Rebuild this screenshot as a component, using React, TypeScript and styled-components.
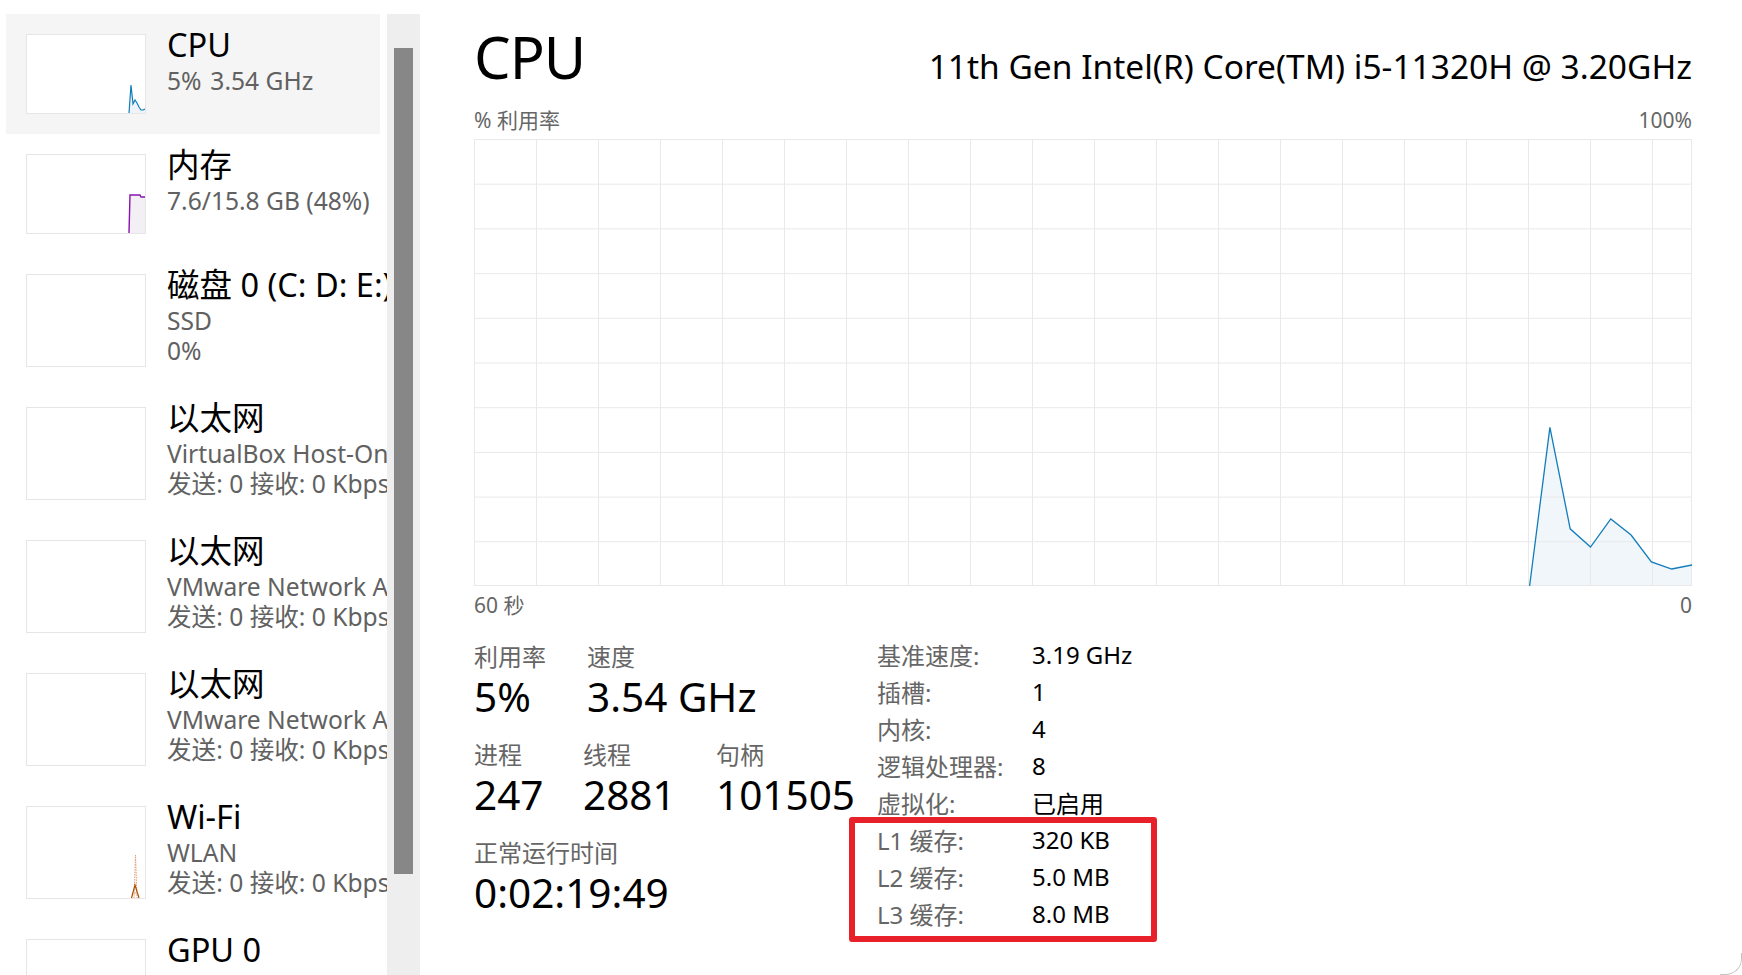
import React from "react";
import styled, { createGlobalStyle } from "styled-components";

const GlobalStyle = createGlobalStyle`
  html, body { margin: 0; padding: 0; background: #fff; }
  body { font-family: "Noto Sans", "Noto Sans CJK SC", sans-serif; color: #000; }
  *, *::before, *::after { box-sizing: border-box; }
`;

const Window = styled.div`
  position: relative;
  display: flex;
  width: 1742px;
  height: 975px;
  overflow: hidden;
  background: #fff;
  border-bottom-right-radius: 16px;
  &::after {
    content: "";
    position: absolute;
    right: 0;
    bottom: 0;
    width: 22px;
    height: 22px;
    border-right: 1.5px solid #c4c4c4;
    border-bottom: 1.5px solid #c4c4c4;
    border-bottom-right-radius: 16px;
    pointer-events: none;
  }
`;

const Sidebar = styled.aside`
  display: flex;
  flex: none;
  width: 420px;
  padding-top: 14px;
`;

const List = styled.div`
  width: 387px;
  padding-left: 6px;
  overflow: hidden;
  display: flex;
  flex-direction: column;
`;

const Item = styled.div<{ $selected?: boolean }>`
  display: flex;
  flex: none;
  gap: 21px;
  width: 374px;
  padding: 10px 0 20px 20px;
  background: ${(p) => (p.$selected ? "#f5f5f5" : "transparent")};
`;

const Thumb = styled.div<{ $h: number }>`
  flex: none;
  width: 120px;
  height: ${(p) => p.$h}px;
  margin-top: 10px;
  border: 1px solid #e6e6e6;
  background: #fff;
  svg { display: block; }
`;

const ItemText = styled.div`
  display: flex;
  flex-direction: column;
  white-space: nowrap;
`;

const ItemTitle = styled.div`
  font-size: 32.5px;
  line-height: 42px;
  color: #000;
`;

const ItemSub = styled.div`
  font-size: 24.6px;
  line-height: 30px;
  color: #616161;
`;

const ScrollTrack = styled.div`
  width: 33px;
  flex: none;
  background: #eeeeee;
  padding: 34px 7px 0;
`;

const ScrollThumb = styled.div`
  height: 826px;
  background: #878787;
`;

const Main = styled.main`
  flex: 1;
  display: flex;
  flex-direction: column;
  padding: 22px 50px 0 54px;
`;

const Header = styled.div`
  display: flex;
  justify-content: space-between;
  align-items: baseline;
`;

const Heading = styled.h1`
  margin: 0;
  font-weight: 400;
  font-size: 58px;
  line-height: 70px;
  letter-spacing: -1px;
`;

const ProcName = styled.div`
  font-size: 33.5px;
  line-height: 51px;
`;

const ScaleRow = styled.div<{ $mt: number }>`
  display: flex;
  justify-content: space-between;
  font-size: 21px;
  line-height: 28px;
  color: #666;
  margin-top: ${(p) => p.$mt}px;
`;

const ChartBox = styled.div`
  margin-top: 5px;
  svg { display: block; }
`;

const Stats = styled.div`
  display: flex;
  margin-top: 17px;
`;

const LeftStats = styled.div`
  width: 403px;
  flex: none;
  padding-top: 6px;
  display: flex;
  flex-direction: column;
  gap: 18px;
`;

const StatRow = styled.div`
  display: flex;
`;

const Stat = styled.div<{ $w?: number }>`
  display: flex;
  flex-direction: column;
  white-space: nowrap;
  width: ${(p) => (p.$w ? `${p.$w}px` : "auto")};
`;

const StatLabel = styled.div`
  font-size: 24px;
  line-height: 30px;
  color: #666;
`;

const StatValue = styled.div`
  font-size: 40.5px;
  line-height: 50px;
  color: #000;
`;

const InfoTable = styled.div`
  display: flex;
  flex-direction: column;
`;

const InfoRow = styled.div`
  display: flex;
  align-items: center;
  height: 37px;
  font-size: 24px;
  white-space: nowrap;
`;

const InfoLabel = styled.span`
  width: 155px;
  color: #666;
`;

const InfoValue = styled.span`
  color: #000;
`;

const CacheGroup = styled.div`
  position: relative;
  &::after {
    content: "";
    position: absolute;
    left: -28px;
    top: -4px;
    width: 308px;
    bottom: -10px;
    border: 6px solid #e8202a;
    border-radius: 3px;
    pointer-events: none;
  }
`;

const CPU_BLUE = "#117dbb";

const CpuThumb = () => (
  <svg width="118" height="78" viewBox="0 0 118 78">
    <polygon points="102,78 104,50 106,69 108,65 110,68 112,72 114,75 116,75 118,74 118,78" fill="#eef4fa" />
    <polyline points="102,78 104,50 106,69 108,65 110,68 112,72 114,75 116,75 118,74" fill="none" stroke={CPU_BLUE} strokeWidth="1.2" />
  </svg>
);

const MemThumb = () => (
  <svg width="118" height="78" viewBox="0 0 118 78">
    <polygon points="102,78 103,40 113,40 114,42 118,42 118,78" fill="#f3f0f5" />
    <polyline points="102,78 103,40 113,40 114,42 118,42" fill="none" stroke="#8b12ae" strokeWidth="1.4" />
  </svg>
);

const WifiThumb = () => (
  <svg width="118" height="91" viewBox="0 0 118 91">
    <polyline points="107,91 108.5,48 110,91" fill="none" stroke="#e0a070" strokeWidth="1" strokeDasharray="1.5 1" />
    <polyline points="104.5,91 108,78 112,91" fill="none" stroke="#a74f01" strokeWidth="1.2" />
    <line x1="106" y1="86" x2="110.5" y2="86" stroke="#e0a070" strokeWidth="1" />
  </svg>
);

type SideItem = {
  title: string;
  subs: string[];
  h: number;
  selected?: boolean;
  chart?: React.ReactNode;
};

const items: SideItem[] = [
  { title: "CPU", subs: ["5%\u00a0\u200a3.54 GHz"], h: 80, selected: true, chart: <CpuThumb /> },
  { title: "内存", subs: ["7.6/15.8 GB (48%)"], h: 80, chart: <MemThumb /> },
  { title: "磁盘 0 (C: D: E:)", subs: ["SSD", "0%"], h: 93 },
  { title: "以太网", subs: ["VirtualBox Host-Only Network", "发送: 0 接收: 0 Kbps"], h: 93 },
  { title: "以太网", subs: ["VMware Network Adapter VMnet1", "发送: 0 接收: 0 Kbps"], h: 93 },
  { title: "以太网", subs: ["VMware Network Adapter VMnet8", "发送: 0 接收: 0 Kbps"], h: 93 },
  { title: "Wi-Fi", subs: ["WLAN", "发送: 0 接收: 0 Kbps"], h: 93, chart: <WifiThumb /> },
  { title: "GPU 0", subs: ["Intel(R) Iris(R) Xe Graphics", "2%"], h: 93 },
];

const CW = 1218;
const CH = 447;

const cpuData = [0, 0, 0, 0, 0, 0, 0, 0, 0, 35.5, 12.8, 8.7, 15, 11.4, 5.4, 3.8, 4.7];

const BigChart = () => {
  const step = 20.3;
  const startX = CW - step * (cpuData.length - 1);
  const pts = cpuData.map((v, i) => {
    const x = startX + i * step;
    const y = CH - (v / 100) * CH;
    return [x, y];
  });
  const firstIdx = cpuData.findIndex((v) => v > 0) - 1;
  const visible = pts.slice(firstIdx);
  const line = visible.map((p) => `${p[0].toFixed(1)},${p[1].toFixed(1)}`).join(" ");
  const area = `${visible[0][0].toFixed(1)},${CH} ${line} ${CW},${CH}`;
  const vlines: number[] = [];
  for (let x = 0; x < CW; x += 62) vlines.push(x + 0.5);
  const hlines: number[] = [];
  for (let i = 0; i <= 10; i++) hlines.push(Math.min(CH - 0.5, i * 44.7 + 0.5));
  return (
    <svg width={CW} height={CH} viewBox={`0 0 ${CW} ${CH}`}>
      <polygon points={area} fill="#f1f6fb" />
      {vlines.map((x) => (
        <line key={`v${x}`} x1={x} y1={0} x2={x} y2={CH} stroke="#e9e9e9" strokeWidth="1" />
      ))}
      {hlines.map((y) => (
        <line key={`h${y}`} x1={0} y1={y} x2={CW} y2={y} stroke="#e9e9e9" strokeWidth="1" />
      ))}
      <line x1={CW - 0.5} y1={0} x2={CW - 0.5} y2={CH} stroke="#e9e9e9" strokeWidth="1" />
      <polyline points={line} fill="none" stroke={CPU_BLUE} strokeWidth="1.3" />
    </svg>
  );
};

const infoRows: [string, string][] = [
  ["基准速度:", "3.19 GHz"],
  ["插槽:", "1"],
  ["内核:", "4"],
  ["逻辑处理器:", "8"],
  ["虚拟化:", "已启用"],
];

const cacheRows: [string, string][] = [
  ["L1 缓存:", "320 KB"],
  ["L2 缓存:", "5.0 MB"],
  ["L3 缓存:", "8.0 MB"],
];

export default function App() {
  return (
    <>
      <GlobalStyle />
      <Window>
        <Sidebar>
          <List>
            {items.map((it, i) => (
              <Item key={i} $selected={it.selected}>
                <Thumb $h={it.h}>{it.chart}</Thumb>
                <ItemText>
                  <ItemTitle>{it.title}</ItemTitle>
                  {it.subs.map((s, j) => (
                    <ItemSub key={j}>{s}</ItemSub>
                  ))}
                </ItemText>
              </Item>
            ))}
          </List>
          <ScrollTrack>
            <ScrollThumb />
          </ScrollTrack>
        </Sidebar>
        <Main>
          <Header>
            <Heading>CPU</Heading>
            <ProcName>11th Gen Intel(R) Core(TM) i5-11320H @ 3.20GHz</ProcName>
          </Header>
          <ScaleRow $mt={14}>
            <span>% 利用率</span>
            <span>100%</span>
          </ScaleRow>
          <ChartBox>
            <BigChart />
          </ChartBox>
          <ScaleRow $mt={5}>
            <span>60 秒</span>
            <span>0</span>
          </ScaleRow>
          <Stats>
            <LeftStats>
              <StatRow>
                <Stat $w={113}>
                  <StatLabel>利用率</StatLabel>
                  <StatValue>5%</StatValue>
                </Stat>
                <Stat>
                  <StatLabel>速度</StatLabel>
                  <StatValue>3.54 GHz</StatValue>
                </Stat>
              </StatRow>
              <StatRow>
                <Stat $w={109}>
                  <StatLabel>进程</StatLabel>
                  <StatValue>247</StatValue>
                </Stat>
                <Stat $w={133}>
                  <StatLabel>线程</StatLabel>
                  <StatValue>2881</StatValue>
                </Stat>
                <Stat>
                  <StatLabel>句柄</StatLabel>
                  <StatValue>101505</StatValue>
                </Stat>
              </StatRow>
              <StatRow>
                <Stat>
                  <StatLabel>正常运行时间</StatLabel>
                  <StatValue>0:02:19:49</StatValue>
                </Stat>
              </StatRow>
            </LeftStats>
            <InfoTable>
              {infoRows.map(([l, v]) => (
                <InfoRow key={l}>
                  <InfoLabel>{l}</InfoLabel>
                  <InfoValue>{v}</InfoValue>
                </InfoRow>
              ))}
              <CacheGroup>
                {cacheRows.map(([l, v]) => (
                  <InfoRow key={l}>
                    <InfoLabel>{l}</InfoLabel>
                    <InfoValue>{v}</InfoValue>
                  </InfoRow>
                ))}
              </CacheGroup>
            </InfoTable>
          </Stats>
        </Main>
      </Window>
    </>
  );
}
